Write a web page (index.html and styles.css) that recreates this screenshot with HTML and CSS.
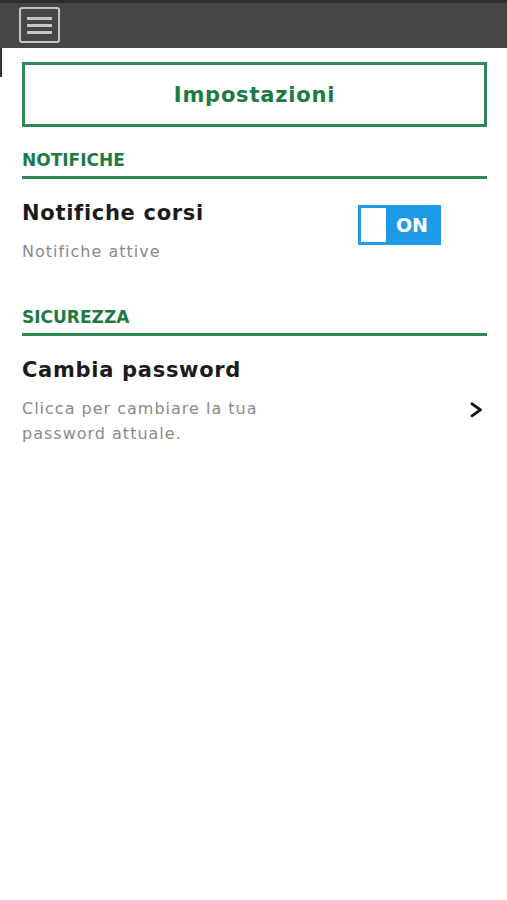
FILE: index.html
```html
<!DOCTYPE html>
<html lang="it">
<head>
  <meta charset="UTF-8">
  <title>Impostazioni</title>
  <link rel="stylesheet" href="styles.css">
</head>
<body>
  <div class="topbar">
    <button class="menu-btn" aria-label="Menu">
      <span></span><span></span><span></span>
    </button>
  </div>
  <div class="scroll-edge"></div>
  <div class="content">
    <div class="page-title">Impostazioni</div>

    <div class="section-head">NOTIFICHE</div>
    <div class="row">
      <div class="row-text">
        <div class="row-title">Notifiche corsi</div>
        <div class="row-desc">Notifiche attive</div>
      </div>
      <div class="toggle">
        <span class="knob"></span>
        <span class="toggle-label">ON</span>
      </div>
    </div>

    <div class="section-head">SICUREZZA</div>
    <div class="row">
      <div class="row-text">
        <div class="row-title">Cambia password</div>
        <div class="row-desc narrow">Clicca per cambiare la tua password attuale.</div>
      </div>
      <svg class="chevron" width="16" height="16" viewBox="0 0 16 16">
        <path d="M4 1.8 L12.5 7.8 L4 13.8" fill="none" stroke="#111" stroke-width="2.8" stroke-linecap="round" stroke-linejoin="round"/>
      </svg>
    </div>
  </div>
</body>
</html>
```

FILE: styles.css
```css
body {
  margin: 0;
  background: #fff;
  font-family: 'DejaVu Sans', 'Liberation Sans', sans-serif;
  color: #1b1b1b;
}
.topbar {
  height: 45px;
  background: #464646;
  border-top: 3px solid #2e2e2e;
  padding-left: 19px;
  box-sizing: content-box;
}
.menu-btn {
  margin-top: 4px;
  width: 41px;
  height: 36px;
  padding: 0;
  background: transparent;
  border: 2px solid #c4c4c4;
  border-radius: 3px;
  display: flex;
  flex-direction: column;
  align-items: center;
  justify-content: center;
  gap: 4px;
}
.menu-btn span {
  display: block;
  width: 25px;
  height: 3px;
  background: #c4c4c4;
}
.scroll-edge {
  position: absolute;
  left: 0;
  top: 48px;
  width: 2px;
  height: 29px;
  background: #333;
}
.content {
  padding: 14px 20px 0 22px;
}
.page-title {
  height: 59px;
  border: 3px solid #2e8a55;
  display: flex;
  align-items: center;
  justify-content: center;
  font-size: 21px;
  font-weight: bold;
  letter-spacing: 0.8px;
  color: #1d7a43;
}
.section-head {
  margin-top: 23px;
  padding-bottom: 6px;
  border-bottom: 3px solid #2e8a55;
  font-size: 17px;
  line-height: 20px;
  font-weight: bold;
  color: #1d7a43;
}
.row {
  display: flex;
  align-items: flex-start;
  justify-content: space-between;
  padding: 21px 0 20px;
}
.row-title {
  font-size: 21px;
  line-height: 26px;
  font-weight: bold;
  letter-spacing: 0.7px;
}
.row-desc {
  margin-top: 13px;
  font-size: 16px;
  line-height: 25px;
  letter-spacing: 1px;
  color: #8a8a8a;
}
.row-desc.narrow {
  max-width: 280px;
}
.toggle {
  margin-top: 5px;
  margin-right: 46px;
  width: 83px;
  height: 40px;
  box-sizing: border-box;
  padding: 3px;
  background: #1e9be6;
  display: flex;
  align-items: center;
}
.knob {
  width: 25px;
  height: 34px;
  background: #fff;
}
.toggle-label {
  flex: 1;
  text-align: center;
  font-size: 19px;
  font-weight: bold;
  color: #fff;
}
.chevron {
  margin-top: 45px;
  margin-right: 3px;
}
```
